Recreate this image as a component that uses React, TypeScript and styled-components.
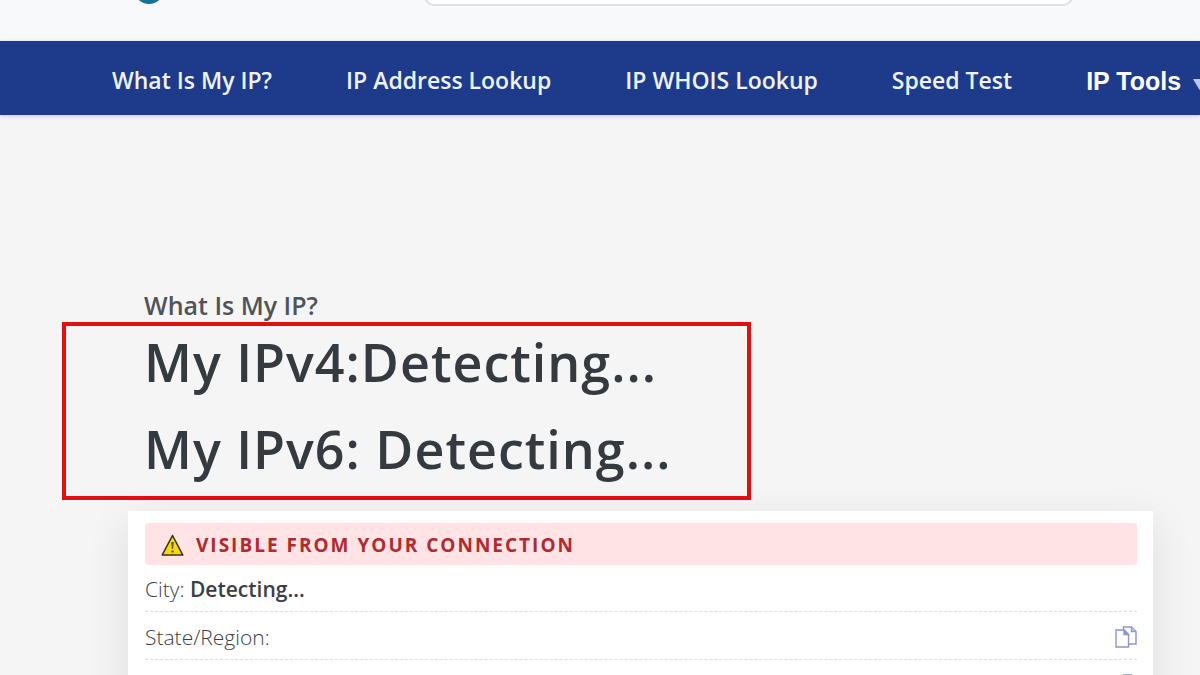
import React from "react";
import styled, { createGlobalStyle } from "styled-components";

const GlobalStyle = createGlobalStyle`
  *, *::before, *::after { box-sizing: border-box; }
  body { margin: 0; background: #f5f5f5; color: #343a40; font-family: "Open Sans", "Noto Sans", sans-serif; }
  h1, h2, p, ul { margin: 0; padding: 0; }
`;

const Page = styled.div`
  display: flex;
  flex-direction: column;
  height: 100vh;
  overflow: hidden;
`;

const Header = styled.header`
  display: flex;
  flex: none;
  align-items: flex-start;
  height: 41px;
  padding: 0 0 0 134px;
  background: #f8f9fb;
  overflow: hidden;
`;

const LogoLink = styled.a`
  display: block;
  width: 30px;
  height: 30px;
  margin: -26px 260px 0 0;
`;

const SearchInput = styled.input`
  flex: 1;
  height: 48px;
  margin: -42px 127px 0 0;
  padding: 0 20px;
  border: 2px solid #dcdfe3;
  border-radius: 10px;
  background: #fff;
  font: inherit;
`;

const Nav = styled.nav`
  display: flex;
  flex: none;
  align-items: center;
  gap: 74px;
  height: 74px;
  padding: 4px 0 0 112px;
  background: #1e3a8a;
  box-shadow: 0 1px 4px rgba(0, 0, 0, 0.2);
  white-space: nowrap;
  overflow: hidden;
`;

const NavLink = styled.a`
  color: #eef3ff;
  font-size: 23px;
  font-weight: 600;
  line-height: 32px;
  text-decoration: none;
`;

const NavButton = styled.button`
  display: flex;
  flex: none;
  align-items: center;
  gap: 12px;
  padding: 2px 0 0;
  border: 0;
  background: none;
  color: #fff;
  font: 700 25px/32px "Liberation Sans", Arial, sans-serif;
`;

const Caret = styled.svg`
  margin-top: 6px;
`;

const Main = styled.main`
  padding-top: 174px;
`;

const Title = styled.h1`
  padding-left: 144px;
  color: #505357;
  font-size: 25px;
  font-weight: 600;
  line-height: 33px;
`;

const Highlight = styled.section`
  max-width: 689px;
  margin-left: 62px;
  padding-left: 78px;
  border: 4px solid #e01010;
`;

const Address = styled.h2`
  height: 87px;
  color: #343a40;
  font-size: 52px;
  font-weight: 600;
  letter-spacing: 1px;
  line-height: 72px;
  white-space: nowrap;

  & + & { height: 83px; }
`;

const Card = styled.section`
  margin: 11px 47px 0 128px;
  padding: 12px 16px 12px 17px;
  background: #fff;
  box-shadow: 0 12px 40px rgba(0, 0, 0, 0.1);
`;

const Banner = styled.p`
  display: flex;
  align-items: center;
  gap: 12px;
  height: 42px;
  padding: 2px 16px 0;
  border-radius: 4px;
  background: #ffe3e5;
  color: #b02a2f;
  font-size: 19px;
  font-weight: 700;
  letter-spacing: 2px;
  text-transform: uppercase;
`;

const Row = styled.li`
  display: flex;
  align-items: center;
  justify-content: space-between;
  height: 48px;
  padding-top: 2px;
  border-bottom: 1px dashed #dcdfe2;
  color: #3a3f45;
  font-size: 21px;
  font-weight: 300;
  list-style: none;

  &:first-child { height: 47px; }
  strong { font-weight: 600; }
`;

const CopyButton = styled.button`
  display: flex;
  margin-left: auto;
  padding: 0;
  border: 0;
  background: none;
`;

function Logo() {
  return (
    <svg width="30" height="30" viewBox="0 0 30 30" aria-hidden="true">
      <circle cx="15" cy="15" r="15" fill="#1c7196" />
      <path d="M2 19c7 6 18 8 26 1" fill="none" stroke="#3da3bd" strokeWidth="2" />
    </svg>
  );
}

function Warning() {
  return (
    <svg width="23" height="22" viewBox="0 0 23 22" aria-hidden="true">
      <path d="M11.5 1.5 21.8 21H1.2Z" fill="#f5d90f" stroke="#333319" strokeWidth="1.6" strokeLinejoin="round" />
      <path d="M10.2 8h2.6l-.7 7h-1.2ZM10.4 16.5h2.2v2h-2.2z" fill="#6b5a0c" />
    </svg>
  );
}

function CopyIcon() {
  return (
    <svg width="22" height="22" viewBox="0 0 22 22" fill="#fff" stroke="#8b96cc" strokeWidth="1.4" aria-hidden="true">
      <path d="M8.5 1h8L21 5.5V18H8.5Z" />
      <path d="M16.5 1v4.5H21" fill="#c3c9ea" />
      <path d="M1 4h8l4.500 4.500V21H1Z" />
      <path d="M9 4v4.500h4.500Z" fill="#8b96cc" />
    </svg>
  );
}

const links = ["What Is My IP?", "IP Address Lookup", "IP WHOIS Lookup", "Speed Test"];
const details = [
  { id: "city", label: "City:", value: "Detecting...", copy: false },
  { id: "region", label: "State/Region:", value: "", copy: true },
  { id: "next", label: "", value: "", copy: true },
];

export default function App() {
  return (
    <Page>
      <GlobalStyle />
      <Header>
        <LogoLink href="#" aria-label="Home"><Logo /></LogoLink>
        <SearchInput type="search" aria-label="Search" />
      </Header>
      <Nav>
        {links.map((text) => <NavLink key={text} href="#">{text}</NavLink>)}
        <NavButton type="button">
          IP Tools
          <Caret width="13" height="11" viewBox="0 0 13 11" aria-hidden="true">
            <path d="M0 0h13L6.500 11Z" fill="#b9c8f0" />
          </Caret>
        </NavButton>
      </Nav>
      <Main>
        <Title>What Is My IP?</Title>
        <Highlight>
          <Address>My IPv4:Detecting...</Address>
          <Address>My IPv6: Detecting...</Address>
        </Highlight>
        <Card>
          <Banner><Warning />Visible from your connection</Banner>
          <ul>
            {details.map(({ id, label, value, copy }) => (
              <Row key={id}>
                {label && <span>{label} <strong>{value}</strong></span>}
                {copy && <CopyButton type="button" aria-label="Copy value"><CopyIcon /></CopyButton>}
              </Row>
            ))}
          </ul>
        </Card>
      </Main>
    </Page>
  );
}
